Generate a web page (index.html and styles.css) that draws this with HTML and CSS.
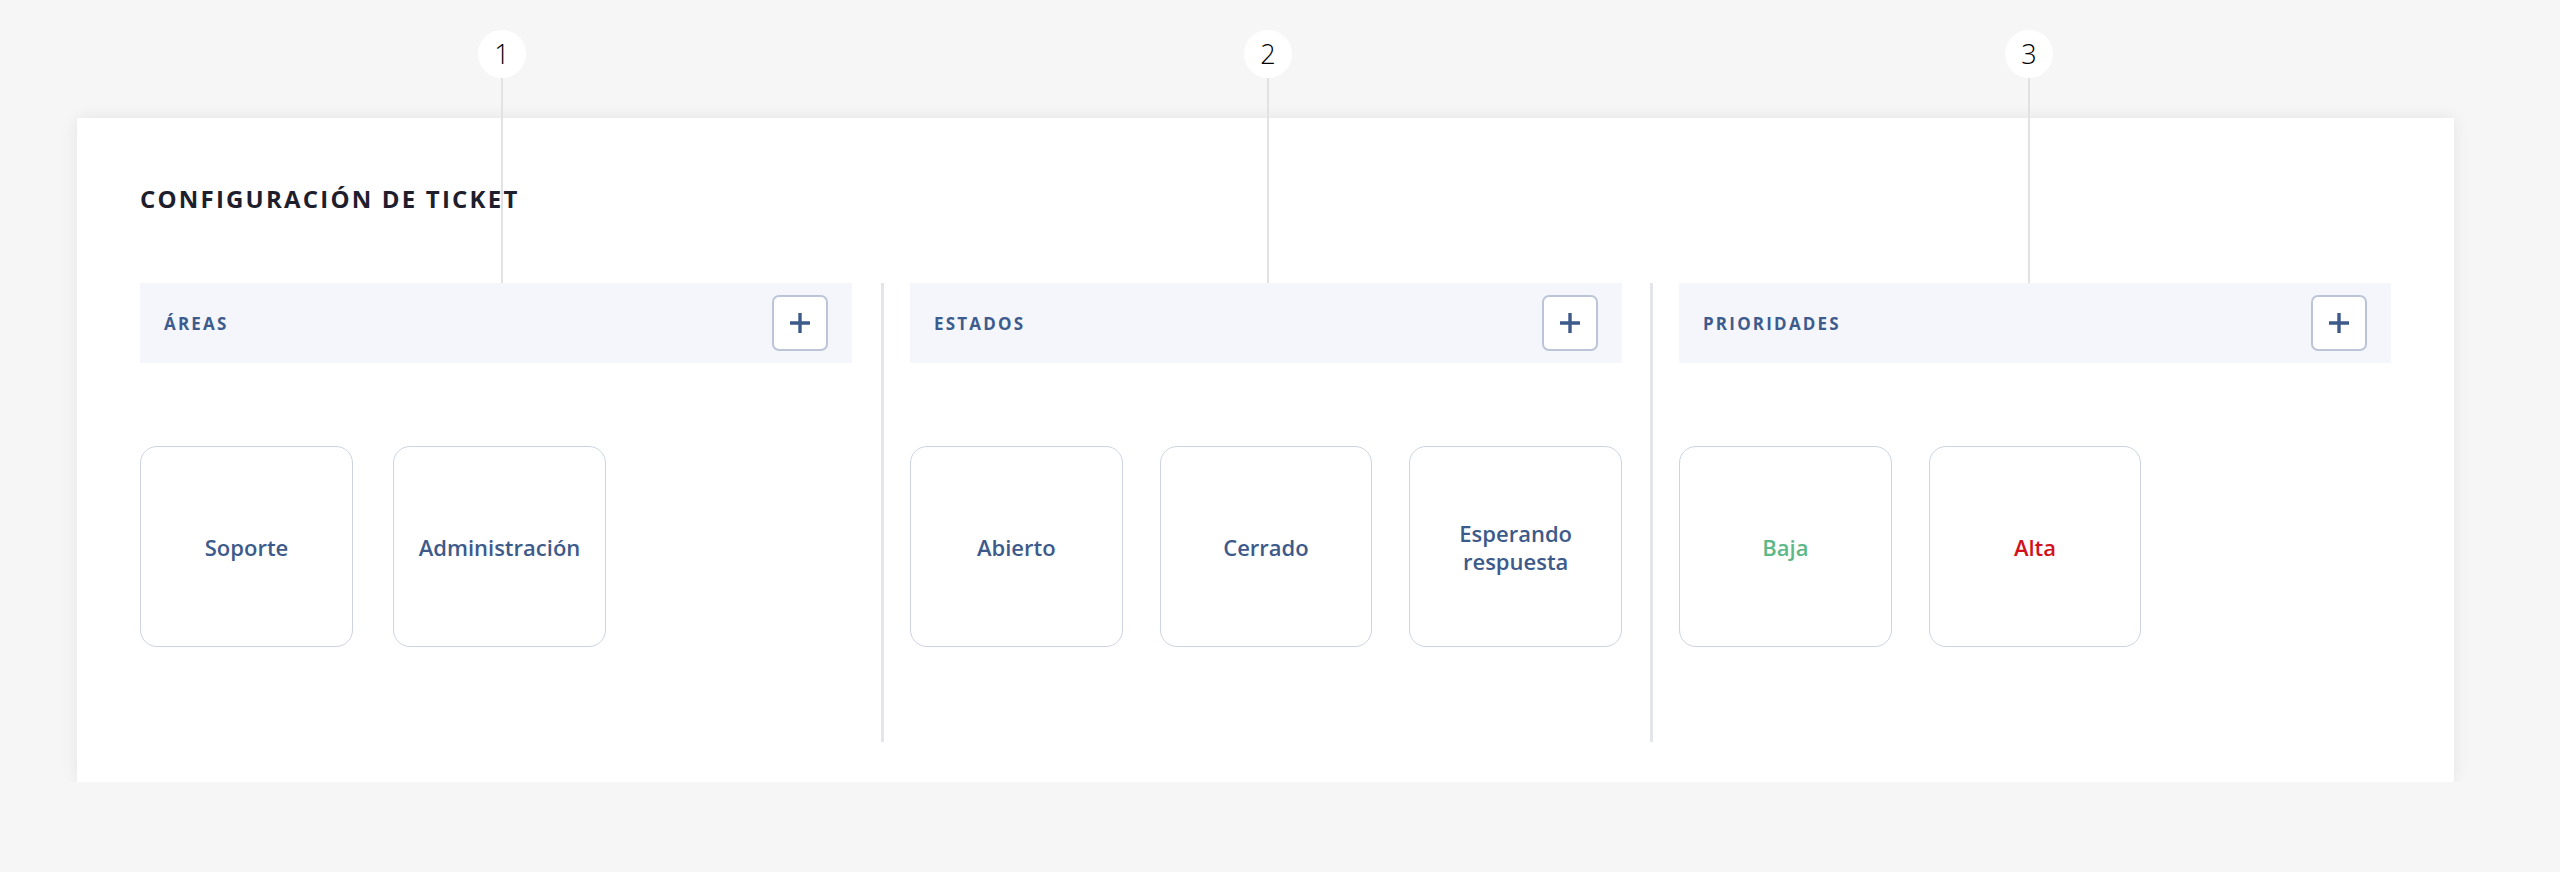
FILE: index.html
```html
<!doctype html>
<html>
    <head>
        <meta http-equiv="Content-Type" content="text/html; charset=utf-8" />
        <title>Configuración de ticket</title>
        <link rel="stylesheet" href="styles.css">
    </head>
<body>

    <div id="page">
        <!-- marcadores numerados -->
        <div class="marker m1"><span class="num">1</span><span class="line"></span></div>
        <div class="marker m2"><span class="num">2</span><span class="line"></span></div>
        <div class="marker m3"><span class="num">3</span><span class="line"></span></div>

        <div class="card">
            <h2 class="title">CONFIGURACIÓN DE TICKET</h2>

            <div class="cols">
                <div class="col">
                    <div class="col-head">
                        <span>ÁREAS</span>
                        <a class="add" href="javascript: void(0);"><svg width="22" height="22" viewBox="0 0 22 22"><path d="M11 1v20M1 11h20" stroke="#3d5a8a" stroke-width="3.4"/></svg></a>
                    </div>
                    <ul class="tiles first">
                        <li>Soporte</li>
                        <li>Administración</li>
                    </ul>
                </div>
                <div class="col">
                    <div class="col-head">
                        <span>ESTADOS</span>
                        <a class="add" href="javascript: void(0);"><svg width="22" height="22" viewBox="0 0 22 22"><path d="M11 1v20M1 11h20" stroke="#3d5a8a" stroke-width="3.4"/></svg></a>
                    </div>
                    <ul class="tiles">
                        <li>Abierto</li>
                        <li>Cerrado</li>
                        <li>Esperando<br>respuesta</li>
                    </ul>
                </div>
                <div class="col">
                    <div class="col-head">
                        <span>PRIORIDADES</span>
                        <a class="add" href="javascript: void(0);"><svg width="22" height="22" viewBox="0 0 22 22"><path d="M11 1v20M1 11h20" stroke="#3d5a8a" stroke-width="3.4"/></svg></a>
                    </div>
                    <ul class="tiles">
                        <li class="low">Baja</li>
                        <li class="high">Alta</li>
                    </ul>
                </div>
            </div>
        </div>
    </div>

</body>
</html>
```

FILE: styles.css
```css
* {
    margin: 0;
    padding: 0;
    outline: 0;
    border: 0;
}

li {
    list-style: none;
}

a {
    text-decoration: none;
}

body {
    background-color: #f6f6f6;
    font-family: "Open Sans", "Noto Sans", sans-serif;
}

#page {
    position: relative;
    padding: 118px 0 0 77px;
}

/* marcadores */
.marker {
    position: absolute;
    top: 30px;
    width: 48px;
    z-index: 2;
    display: flex;
    flex-direction: column;
    align-items: center;
}

.marker.m1 { left: 478px; }
.marker.m2 { left: 1244px; }
.marker.m3 { left: 2005px; }

.marker .num {
    width: 48px;
    height: 48px;
    border-radius: 50%;
    background-color: #fff;
    color: #000;
    font-size: 27px;
    font-weight: 300;
    line-height: 48px;
    text-align: center;
}

.marker .line {
    width: 2px;
    height: 205px;
    background-color: #e2e2e2;
}

/* tarjeta */
.card {
    width: 2251px;
    padding: 65px 63px 40px;
    background-color: #fff;
    box-shadow: 0 0 16px rgba(0, 0, 0, 0.08);
}

.title {
    font-size: 24px;
    line-height: 32px;
    font-weight: 700;
    letter-spacing: 2.2px;
    color: #1e1e2d;
    margin-bottom: 68px;
}

.cols {
    display: flex;
}

.col {
    flex: 1 1 0;
    min-width: 0;
    padding: 0 28px 0 26px;
    border-right: 3px solid #e3e5ea;
}

.col:first-child {
    padding-left: 0;
    padding-right: 29px;
}

.col:last-child {
    padding-right: 0;
    border-right: 0;
}

.col-head {
    height: 80px;
    padding: 0 24px;
    display: flex;
    align-items: center;
    justify-content: space-between;
    background-color: #f4f6fb;
    color: #3e5b8d;
    font-size: 17px;
    font-weight: 700;
    letter-spacing: 2.2px;
}

.add {
    width: 52px;
    height: 52px;
    border: 2px solid #bcc5d8;
    border-radius: 7px;
    background-color: #fff;
    display: flex;
    align-items: center;
    justify-content: center;
}

.tiles {
    display: grid;
    grid-template-columns: repeat(3, 1fr);
    gap: 37px;
    padding: 83px 0 95px;
}

.tiles.first {
    grid-template-columns: repeat(2, 213px);
    gap: 40px;
}

.tiles li {
    height: 199px;
    border: 1px solid #cdd4e1;
    border-radius: 17px;
    display: flex;
    align-items: center;
    justify-content: center;
    text-align: center;
    color: #3d5a8a;
    font-size: 22px;
    line-height: 28px;
    font-weight: 600;
}

.tiles li.low {
    color: #5db887;
}

.tiles li.high {
    color: #d2121b;
}
```
